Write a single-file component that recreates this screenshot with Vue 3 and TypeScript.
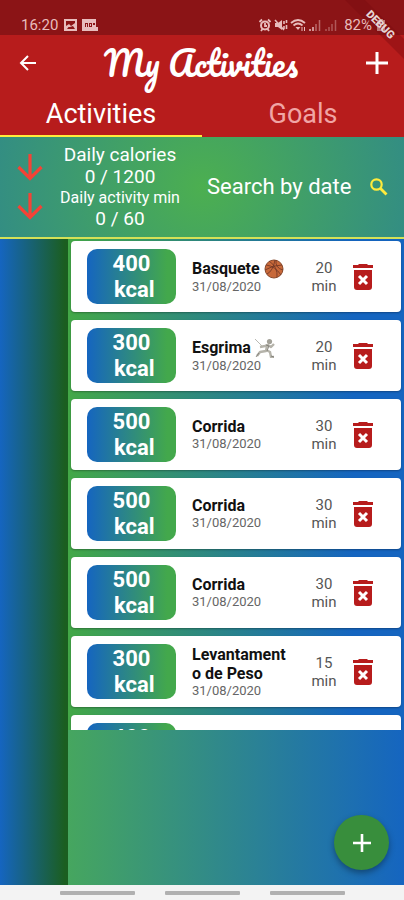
<script setup lang="ts">
interface Activity {
  id: number
  kcal: number
  name: string
  icon?: 'ball' | 'fencer'
  date: string
  minutes: number
}

const activities: Activity[] = [
  { id: 1, kcal: 400, name: 'Basquete', icon: 'ball', date: '31/08/2020', minutes: 20 },
  { id: 2, kcal: 300, name: 'Esgrima', icon: 'fencer', date: '31/08/2020', minutes: 20 },
  { id: 3, kcal: 500, name: 'Corrida', date: '31/08/2020', minutes: 30 },
  { id: 4, kcal: 500, name: 'Corrida', date: '31/08/2020', minutes: 30 },
  { id: 5, kcal: 500, name: 'Corrida', date: '31/08/2020', minutes: 30 },
  { id: 6, kcal: 300, name: 'Levantamento de Peso', date: '31/08/2020', minutes: 15 },
  { id: 7, kcal: 400, name: 'Basquete', icon: 'ball', date: '31/08/2020', minutes: 20 },
]
</script>

<template>
  <div class="screen">
    <div class="status">
      <span class="clock">16:20</span>
      <svg class="s-icon notice" viewBox="0 0 14 14"><path fill="currentColor" fill-rule="evenodd" d="M0 1h13v12H0zM2 3v5l3-2 2 2 4-3V3zM3 11h8L9 8 6 9 4.500 9z" /></svg>
      <svg class="s-icon wide" viewBox="0 0 16 14"><path fill="currentColor" fill-rule="evenodd" d="M0 1h14v8h2v4H0zM3 5v4h1V6h1v3h1V5zM7 5v4h3V5zM8 6h1v2H8zM11 5v2h2V5z" /></svg>
      <span class="spacer"></span>
      <svg class="s-icon" viewBox="0 0 14 14"><g fill="none" stroke="currentColor" stroke-width="2"><circle cx="7" cy="7.500" r="4" /><path d="M1.500 4 4 1.500M12.500 4 10 1.500M3 13l1.500-2M11 13l-1.500-2M7 5v3h2" stroke-width="1.800" /></g></svg>
      <svg class="s-icon" viewBox="0 0 14 14"><path fill="currentColor" d="M1 5h3l4-3v10L4 9H1z" /><path d="M1 2l9 10M10 3v3M10 8v3M12.500 2v3M12.500 7v4" fill="none" stroke="currentColor" stroke-width="1.600" /></svg>
      <svg class="s-icon wide" viewBox="0 0 16 14"><g fill="none" stroke="currentColor" stroke-width="1.800"><path d="M1 5q7-6 14 0M3.500 7.500q4.500-4 9 0" /><path d="M5.500 9h5L8 12z" fill="currentColor" stroke="none" /><path d="M12 9v4M14.500 9v4" stroke-width="1" /></g></svg>
      <svg class="s-icon" viewBox="0 0 14 14"><path d="M2 13v-2M5 13V9" stroke="currentColor" stroke-width="1.500" /><path d="M8 13V6M11.500 13V2" stroke="currentColor" stroke-width="1.500" opacity=".5" /></svg>
      <svg class="s-icon" viewBox="0 0 14 14"><path d="M2 13v-2M5 13V9M8 13V6M11.500 13V2" stroke="currentColor" stroke-width="1.500" opacity=".4" /></svg>
      <span class="battery">82%</span>
      <svg class="s-icon" viewBox="0 0 14 14"><path fill="currentColor" fill-rule="evenodd" d="M3 2h2V1h4v1h2v11H3zM8 3 4.500 8H7l-1 4 4-6H7.500z" /></svg>
    </div>

    <div class="ribbon"><span>DEBUG</span></div>

    <header class="header">
      <div class="bar">
        <button class="icon-btn" type="button" aria-label="Back">
          <svg width="18" height="18" viewBox="0 0 18 18"><path d="M17 9H2M9 2 2 9l7 7" fill="none" stroke="#fff" stroke-width="2" /></svg>
        </button>
        <h1>My Activities</h1>
        <button class="icon-btn" type="button" aria-label="Add activity">
          <svg width="24" height="24" viewBox="0 0 24 24"><path d="M12 1v22M1 12h22" stroke="#fff" stroke-width="3" /></svg>
        </button>
      </div>
      <nav class="tabs">
        <button class="tab active" type="button">Activities</button>
        <button class="tab" type="button">Goals</button>
      </nav>
    </header>

    <section class="summary">
      <div class="arrows">
        <svg v-for="n in 2" :key="n" width="26" height="27" viewBox="0 0 26 27"><path d="M13 0v24M1.500 13 13 24.500 24.500 13" fill="none" stroke="#f44336" stroke-width="3.200" /></svg>
      </div>
      <div class="totals">
        <p>Daily calories</p>
        <p>0 / 1200</p>
        <p class="small">Daily activity min</p>
        <p>0 / 60</p>
      </div>
      <button class="search" type="button">
        <span>Search by date</span>
        <svg width="18" height="18" viewBox="0 0 18 18"><circle cx="6.500" cy="6.500" r="5.200" fill="none" stroke="#ffeb3b" stroke-width="2.200" /><path d="m10.500 10.500 6 6" stroke="#ffeb3b" stroke-width="2.800" /></svg>
      </button>
    </section>

    <main class="body">
      <aside class="side"></aside>
      <div class="content">
        <ul class="list">
          <li v-for="a in activities" :key="a.id" class="card">
            <div class="kcal"><span>{{ a.kcal }}<br />&nbsp;kcal</span></div>
            <div class="info">
              <div class="name">
                <span>{{ a.name }}</span>
                <svg v-if="a.icon === 'ball'" class="emoji" viewBox="0 0 20 20">
                  <circle cx="10" cy="10" r="9" fill="#c8693a" stroke="#8a4a2c" />
                  <path d="M2 6q9 1 15 10M1 11q8-5 17-5M5 2q9 6 8 16M3 15q6-3 8-14M12 1q-1 8 7 10" fill="none" stroke="#6d3524" stroke-width=".8" />
                </svg>
                <svg v-else-if="a.icon === 'fencer'" class="emoji" viewBox="0 0 20 20">
                  <path d="M0 1l7 7" stroke="#a8a8a0" stroke-width=".8" />
                  <circle cx="14.500" cy="3.500" r="2.600" fill="#a3a198" />
                  <path d="M5 9l5-1 3-1 3 2 3-3M12 8l-1 5-6 1-3 4M11 12l4 2 1 5h3" fill="none" stroke="#b5b3aa" stroke-width="2.400" stroke-linejoin="round" />
                  <path d="M11 7l3 1-2 5M4 15l-3 4M16 18l3 1" fill="none" stroke="#77756e" stroke-width=".8" />
                </svg>
              </div>
              <div class="date">{{ a.date }}</div>
            </div>
            <div class="minutes">{{ a.minutes }}<br />min</div>
            <button class="delete" type="button" :aria-label="`Delete ${a.name}`">
              <svg width="20" height="27" viewBox="0 0 20 27"><path fill="#b71c1c" d="M0 2h5l1-1h8l1 1h5v3H0zM1 7h18v17q0 3-3 3H4q-3 0-3-3z" /><path d="m6 13 8 8M14 13l-8 8" stroke="#fff" stroke-width="3" /></svg>
            </button>
          </li>
        </ul>
        <button class="fab" type="button" aria-label="New activity">
          <svg width="18" height="18" viewBox="0 0 18 18"><path d="M9 0v18M0 9h18" stroke="#fff" stroke-width="2.600" /></svg>
        </button>
      </div>
    </main>

    <div class="system-nav"><i></i><i></i><i></i></div>
  </div>
</template>

<style>
body {
  margin: 0;
}
</style>

<style scoped>
* {
  box-sizing: border-box;
}
.screen {
  position: relative;
  display: flex;
  flex-direction: column;
  height: 100vh;
  overflow: hidden;
  font-family: Roboto, "Liberation Sans", sans-serif;
  background: #1565c0;
}
button {
  padding: 0;
  border: 0;
  background: none;
  font: inherit;
  color: inherit;
}
svg {
  display: block;
  flex: none;
}
h1,
p,
ul {
  margin: 0;
  padding: 0;
}
.status {
  display: flex;
  align-items: center;
  gap: 2px;
  height: 35px;
  padding: 14px 16px 0 21px;
  background: #8b1416;
  color: #e8bcbc;
  font-size: 15px;
  line-height: 20px;
}
.clock {
  margin-right: 4px;
}
.s-icon {
  width: 14px;
  height: 14px;
}
.s-icon.wide {
  width: 16px;
}
.s-icon.notice {
  margin-right: 2px;
}
.spacer {
  flex: 1;
}
.battery {
  margin-left: 4px;
}
.ribbon {
  position: absolute;
  top: 0;
  right: 0;
  width: 60px;
  height: 60px;
  overflow: hidden;
  z-index: 2;
}
.ribbon span {
  position: absolute;
  top: 18px;
  right: -31px;
  width: 110px;
  transform: rotate(45deg);
  background: rgba(120, 10, 14, 0.4);
  color: #e6d5d5;
  font-size: 11px;
  font-weight: 900;
  line-height: 14px;
  text-align: center;
}
.header {
  background: #b71c1c;
  color: #fff;
}
.bar {
  display: flex;
  align-items: center;
  justify-content: space-between;
  height: 56px;
  padding: 0 15px 0 19px;
}
.bar h1 {
  font-family: Pacifico, "Liberation Serif", serif;
  font-size: 33px;
  font-weight: 400;
  line-height: 40px;
}
.icon-btn {
  display: flex;
}
.tabs {
  display: flex;
  height: 46px;
}
.tab {
  flex: 1;
  padding-top: 2px;
  border-bottom: 2px solid transparent;
  color: #f0a5a5;
  font-size: 27px;
  line-height: 32px;
}
.tab.active {
  border-color: #ffeb3b;
  color: #fff;
}
.summary {
  display: flex;
  align-items: center;
  height: 102px;
  padding: 0 16px 0 17px;
  border-bottom: 2px solid #d4e157;
  background: radial-gradient(circle at center, #4caf50 0, #1565c0 460px);
  color: #fff;
}
.arrows {
  display: flex;
  flex-direction: column;
  gap: 12px;
}
.totals {
  flex: none;
  width: 154px;
  font-size: 19px;
  line-height: 22px;
  text-align: center;
}
.totals .small {
  font-size: 16px;
  line-height: 20px;
}
.search {
  display: flex;
  flex: 1;
  align-items: center;
  justify-content: space-between;
  padding-left: 10px;
  font-size: 22px;
  line-height: 26px;
}
.body {
  display: flex;
  flex: 1;
  min-height: 0;
}
.side {
  width: 68px;
  background: linear-gradient(90deg, #1565c0, #1b5e20 95%);
}
.content {
  position: relative;
  flex: 1;
  min-width: 0;
  background: linear-gradient(90deg, #46a65f, #1565c0);
}
.list {
  display: flex;
  flex-direction: column;
  gap: 8px;
  height: 76%;
  padding: 2px 3px 0;
  overflow-y: auto;
  scrollbar-width: none;
  background: linear-gradient(90deg, #43a847, #1565c0 85%);
  list-style: none;
}
.card {
  display: flex;
  flex: none;
  align-items: center;
  height: 71px;
  padding: 0 28px 0 16px;
  border-radius: 4px;
  background: #fff;
  box-shadow: 0 1px 2px rgba(0, 0, 0, 0.3);
}
.kcal {
  display: flex;
  flex: none;
  align-items: center;
  justify-content: center;
  width: 89px;
  height: 55px;
  border-radius: 10px;
  background: linear-gradient(90deg, #1565c0, #43a84c 90%);
  color: #fff;
  font-size: 22px;
  font-weight: 700;
  line-height: 26px;
  text-align: center;
}
.info {
  flex: 1;
  min-width: 0;
  padding: 0 22px 0 16px;
}
.name {
  display: flex;
  align-items: center;
  gap: 4px;
  color: #111;
  font-size: 16px;
  font-weight: 700;
  line-height: 19px;
}
.name span {
  word-break: break-all;
}
.emoji {
  width: 20px;
  height: 20px;
}
.date {
  color: #666;
  font-size: 13px;
  line-height: 16px;
}
.minutes {
  flex: none;
  width: 26px;
  margin-right: 16px;
  color: #555;
  font-size: 15px;
  line-height: 18px;
  text-align: center;
}
.fab {
  position: absolute;
  right: 15px;
  bottom: 15px;
  display: flex;
  align-items: center;
  justify-content: center;
  width: 55px;
  height: 55px;
  border-radius: 50%;
  background: #388e3c;
  box-shadow: 0 3px 6px rgba(0, 0, 0, 0.35);
}
.system-nav {
  display: flex;
  align-items: center;
  justify-content: center;
  gap: 30px;
  height: 15px;
  background: #f3f3f3;
}
.system-nav i {
  width: 75px;
  height: 4px;
  border-radius: 1px;
  background: #b0b0b0;
}
</style>
